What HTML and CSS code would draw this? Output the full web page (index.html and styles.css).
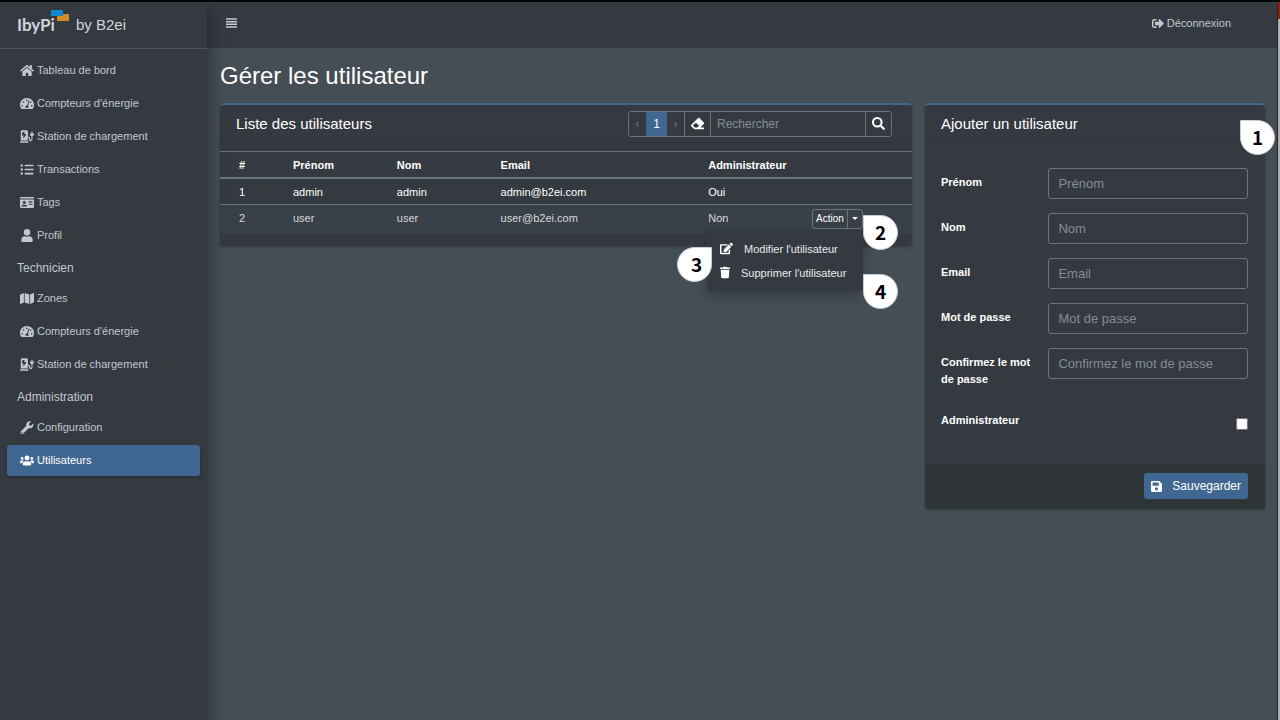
FILE: index.html
```
<!DOCTYPE html>
<html lang="fr">
<head>
<meta charset="utf-8">
<title>Gérer les utilisateur</title>
<link rel="stylesheet" href="styles.css">
</head>
<body>
<svg class="defs" aria-hidden="true">
  <symbol id="home" viewBox="0 0 576 512"><path d="M280.400 148.300L96 300.100V464a16 16 0 0 0 16 16l112-.3a16 16 0 0 0 16-16V368a16 16 0 0 1 16-16h64a16 16 0 0 1 16 16v95.600a16 16 0 0 0 16 16.100L464 480a16 16 0 0 0 16-16V300L295.700 148.300a12.200 12.200 0 0 0-15.300 0zM571.600 251.500L488 182.600V44a12 12 0 0 0-12-12h-56a12 12 0 0 0-12 12v72.600L318.500 43a48 48 0 0 0-61 0L4.300 251.500a12 12 0 0 0-1.600 16.900l25.500 31a12 12 0 0 0 16.900 1.600l235.200-193.700a12.200 12.200 0 0 1 15.300 0L530.900 301a12 12 0 0 0 16.900-1.600l25.500-31a12 12 0 0 0-1.700-16.900z"/></symbol>
  <symbol id="gauge" viewBox="0 0 576 512"><path fill-rule="evenodd" d="M288 32C129 32 0 161 0 320c0 53 14 102 39 145 6 9 16 15 27 15h444c11 0 21-6 27-15 25-43 39-92 39-145C576 161 447 32 288 32zM288 96a32 32 0 1 1 0 64 32 32 0 0 1 0-64zM96 384a32 32 0 1 1 0-64 32 32 0 0 1 0 64zm48-160a32 32 0 1 1 0-64 32 32 0 0 1 0 64zm247-56l-61 184c13 12 22 29 22 48 0 12-3 23-9 32H233c-6-9-9-20-9-32 0-35 29-64 64-64 2 0 3 0 5 1l61-185c4-12 18-19 30-15 13 4 11 19 7 31zm15 46c5-32 31-54 58-38 18 10 20 34 4 44-22 14-50 6-62-6zm74 170a32 32 0 1 1 0-64 32 32 0 0 1 0 64z"/></symbol>
  <symbol id="station" viewBox="0 0 576 512"><path d="M336 448H16c-9 0-16 7-16 16v32c0 9 7 16 16 16h320c9 0 16-7 16-16v-32c0-9-7-16-16-16zm208-320V80a16 16 0 0 0-32 0v48h-32V80a16 16 0 0 0-32 0v48h-16a16 16 0 0 0-16 16v32c0 36 24 66 56 76v122c0 14-11 26-24 26s-24-12-24-26v-22c0-49-39-88-88-88h-8V64c0-35-29-64-64-64H96C61 0 32 29 32 64v352h288V304h8c22 0 40 18 40 40v30c0 40 33 74 72 74s72-34 72-74V252c32-10 56-40 56-76v-32a16 16 0 0 0-16-16h-8zM258 182L152 313c-8 9-22 2-20-9l16-90h-54c-8 0-14-7-12-15L98 79c1-6 6-9 12-9h68c8 0 14 7 12 15l-16 71h72c12 0 20 14 12 26z"/></symbol>
  <symbol id="list" viewBox="0 0 512 512"><path d="M48 48a48 48 0 1 0 0 96 48 48 0 0 0 0-96zm0 160a48 48 0 1 0 0 96 48 48 0 0 0 0-96zm0 160a48 48 0 1 0 0 96 48 48 0 0 0 0-96zm448 16H176a16 16 0 0 0-16 16v32a16 16 0 0 0 16 16h320a16 16 0 0 0 16-16v-32a16 16 0 0 0-16-16zm0-320H176a16 16 0 0 0-16 16v32a16 16 0 0 0 16 16h320a16 16 0 0 0 16-16V80a16 16 0 0 0-16-16zm0 160H176a16 16 0 0 0-16 16v32a16 16 0 0 0 16 16h320a16 16 0 0 0 16-16v-32a16 16 0 0 0-16-16z"/></symbol>
  <symbol id="card" viewBox="0 0 576 512"><path d="M528 32H48C22 32 0 54 0 80v16h576V80c0-26-22-48-48-48zM0 432c0 26 22 48 48 48h480c26 0 48-22 48-48V128H0v304zm352-232c0-4 4-8 8-8h144c4 0 8 4 8 8v16c0 4-4 8-8 8H360c-4 0-8-4-8-8v-16zm0 64c0-4 4-8 8-8h144c4 0 8 4 8 8v16c0 4-4 8-8 8H360c-4 0-8-4-8-8v-16zm0 64c0-4 4-8 8-8h144c4 0 8 4 8 8v16c0 4-4 8-8 8H360c-4 0-8-4-8-8v-16zM176 192a64 64 0 1 1 0 128 64 64 0 0 1 0-128zM67 396c9-26 33-44 62-44h8c25 10 54 10 79 0h8c29 0 53 18 62 44 3 10-6 20-16 20H83c-11 0-19-10-16-20z"/></symbol>
  <symbol id="user" viewBox="0 0 448 512"><path d="M224 256a128 128 0 1 0 0-256 128 128 0 0 0 0 256zm90 32h-17a174 174 0 0 1-146 0h-17C60 288 0 348 0 422v42c0 27 21 48 48 48h352c27 0 48-21 48-48v-42c0-74-60-134-134-134z"/></symbol>
  <symbol id="map" viewBox="0 0 576 512"><path d="M0 118v346c0 11 11 19 22 15l138-63V32L20 88c-12 5-20 17-20 30zm192 298l192 64V96L192 32v384zM554 33L416 96v384l140-56c12-5 20-17 20-30V48c0-11-11-19-22-15z"/></symbol>
  <symbol id="wrench" viewBox="0 0 512 512"><path d="M507 116c-2-9-14-12-21-5l-74 74-68-11-11-68 74-74c7-7 4-19-5-21A144 144 0 0 0 231 189L19 402a64 64 0 1 0 91 91l212-212a144 144 0 0 0 185-165zM64 472a24 24 0 1 1 0-48 24 24 0 0 1 0 48z"/></symbol>
  <symbol id="users" viewBox="0 0 640 512"><path d="M96 224a64 64 0 1 0 0-128 64 64 0 0 0 0 128zm448 0a64 64 0 1 0 0-128 64 64 0 0 0 0 128zm32 32h-64c-18 0-34 7-45 19 40 22 69 62 75 109h66c18 0 32-14 32-32v-32c0-35-29-64-64-64zm-256 0a112 112 0 1 0 0-224 112 112 0 0 0 0 224zm77 32h-8a155 155 0 0 1-138 0h-8C179 288 128 339 128 403v29c0 27 21 48 48 48h288c27 0 48-21 48-48v-29c0-64-51-115-115-115zm-224-13c-11-12-27-19-45-19H64c-35 0-64 29-64 64v32c0 18 14 32 32 32h66c6-47 35-87 75-109z"/></symbol>
  <symbol id="bars" viewBox="0 0 110 100"><path d="M0 2h110v15H0zM0 29h110v15H0zM0 56h110v15H0zM0 83h110v15H0z"/></symbol>
  <symbol id="logout" viewBox="0 0 512 512"><path d="M497 273L329 441c-15 15-41 4-41-17v-96H152c-13 0-24-11-24-24v-96c0-13 11-24 24-24h136V88c0-21 26-32 41-17l168 168c9 10 9 25 0 34zM192 436v-40c0-7-5-12-12-12H96c-18 0-32-14-32-32V160c0-18 14-32 32-32h84c7 0 12-5 12-12V76c0-7-5-12-12-12H96c-53 0-96 43-96 96v192c0 53 43 96 96 96h84c7 0 12-5 12-12z"/></symbol>
  <symbol id="eraser" viewBox="0 0 512 512"><path d="M498 274c19-19 19-49 0-68L338 46c-19-19-49-19-68 0L14 302c-19 19-19 49 0 68l96 96c9 9 21 14 34 14h356c7 0 12-5 12-12v-40c0-7-5-12-12-12H376l122-142zM195 227l122 122-67 67H150l-80-80 125-109z"/></symbol>
  <symbol id="search" viewBox="0 0 512 512"><path d="M505 443L405 343c-4-4-11-7-17-7h-16A208 208 0 1 0 336 372v16c0 6 3 13 7 17l100 100c9 9 24 9 34 0l28-28c9-10 9-25 0-34zM208 336a128 128 0 1 1 0-256 128 128 0 0 1 0 256z"/></symbol>
  <symbol id="edit" viewBox="0 0 576 512"><path d="M403 83l90 90c4 4 4 10 0 14L274 406l-93 10c-12 2-23-9-21-21l10-93L389 83c4-4 10-4 14 0zm162-23l-49-49c-15-15-40-15-55 0l-35 35c-4 4-4 10 0 14l90 90c4 4 10 4 14 0l35-35c15-15 15-40 0-55zM384 346v102H64V128h230c3 0 6-1 8-4l40-40c8-7 3-20-8-20H48c-26 0-48 22-48 48v352c0 26 22 48 48 48h352c26 0 48-22 48-48V306c0-11-13-16-20-8l-40 40c-3 2-4 5-4 8z"/></symbol>
  <symbol id="trash" viewBox="0 0 448 512"><path d="M432 32H312l-9-19A24 24 0 0 0 281 0H167a24 24 0 0 0-22 13l-9 19H16A16 16 0 0 0 0 48v32a16 16 0 0 0 16 16h416a16 16 0 0 0 16-16V48a16 16 0 0 0-16-16zM32 128l21 339a48 48 0 0 0 48 45h246a48 48 0 0 0 48-45l21-339z"/></symbol>
  <symbol id="save" viewBox="0 0 448 512"><path d="M434 130l-84-84c-9-9-21-14-34-14H48C21 32 0 54 0 80v352c0 27 21 48 48 48h352c27 0 48-21 48-48V164c0-13-5-25-14-34zM224 416a64 64 0 1 1 0-128 64 64 0 0 1 0 128zm96-304v100c0 7-5 12-12 12H76c-7 0-12-5-12-12V108c0-7 5-12 12-12h232z"/></symbol>
</svg>
<div class="app">
  <aside class="sidebar">
    <a class="brand" href="#">
      <span class="logo">IbyPi<svg class="flag" viewBox="0 0 18 11" aria-hidden="true"><path fill="#d18b20" d="M6 4h12v7H6z"/><path fill="#1487d4" d="M0 0h12v6H0z"/></svg></span>
      <span class="by">by B2ei</span>
    </a>
    <nav class="nav">
      <a href="#"><svg><use href="#home"/></svg>Tableau de bord</a>
      <a href="#"><svg><use href="#gauge"/></svg>Compteurs d'énergie</a>
      <a href="#"><svg><use href="#station"/></svg>Station de chargement</a>
      <a href="#"><svg><use href="#list"/></svg>Transactions</a>
      <a href="#"><svg><use href="#card"/></svg>Tags</a>
      <a href="#"><svg><use href="#user"/></svg>Profil</a>
      <h2>Technicien</h2>
      <a href="#"><svg><use href="#map"/></svg>Zones</a>
      <a href="#"><svg><use href="#gauge"/></svg>Compteurs d'énergie</a>
      <a href="#"><svg><use href="#station"/></svg>Station de chargement</a>
      <h2>Administration</h2>
      <a href="#"><svg><use href="#wrench"/></svg>Configuration</a>
      <a href="#" class="active"><svg><use href="#users"/></svg>Utilisateurs</a>
    </nav>
  </aside>
  <div class="page">
    <header class="topbar">
      <button class="menu-toggle" type="button" aria-label="Menu"><svg><use href="#bars"/></svg></button>
      <a class="logout" href="#"><svg><use href="#logout"/></svg>Déconnexion</a>
    </header>
    <main class="content">
      <h1>Gérer les utilisateur</h1>
      <div class="columns">
        <section class="card">
          <div class="card-header">
            <h3>Liste des utilisateurs</h3>
            <div class="tools">
              <button class="pg" type="button" disabled>‹</button>
              <button class="pg current" type="button">1</button>
              <button class="pg" type="button" disabled>›</button>
              <button class="erase" type="button" aria-label="Effacer"><svg><use href="#eraser"/></svg></button>
              <input type="text" placeholder="Rechercher" aria-label="Rechercher">
              <button class="find" type="button" aria-label="Lancer la recherche"><svg><use href="#search"/></svg></button>
            </div>
          </div>
          <div class="table-wrap">
            <table>
              <colgroup><col class="c-id"><col class="c-name"><col class="c-name"><col class="c-mail"><col class="c-name"><col></colgroup>
              <thead><tr><th>#</th><th>Prénom</th><th>Nom</th><th>Email</th><th>Administrateur</th><th></th></tr></thead>
              <tbody>
                <tr><td>1</td><td>admin</td><td>admin</td><td>admin@b2ei.com</td><td>Oui</td><td></td></tr>
                <tr class="hover"><td>2</td><td>user</td><td>user</td><td>user@b2ei.com</td><td>Non</td><td>
                  <div class="action">
                    <button type="button">Action</button><button class="caret" type="button" aria-label="Ouvrir le menu"><span></span></button>
                    <div class="dropdown">
                      <a href="#"><svg><use href="#edit"/></svg><span>Modifier l'utilisateur</span></a>
                      <a href="#"><svg class="bin"><use href="#trash"/></svg><span>Supprimer l'utilisateur</span></a>
                    </div>
                    <span class="marker m2">2</span>
                    <span class="marker m3">3</span>
                    <span class="marker m4">4</span>
                  </div>
                </td></tr>
              </tbody>
            </table>
          </div>
        </section>
        <form class="card">
          <div class="card-header"><h3>Ajouter un utilisateur</h3></div>
          <div class="fields">
            <label for="prenom">Prénom</label><input id="prenom" type="text" placeholder="Prénom">
            <label for="nom">Nom</label><input id="nom" type="text" placeholder="Nom">
            <label for="email">Email</label><input id="email" type="email" placeholder="Email">
            <label for="mdp">Mot de passe</label><input id="mdp" type="password" placeholder="Mot de passe">
            <label for="mdp2">Confirmez le mot de passe</label><input id="mdp2" type="password" placeholder="Confirmez le mot de passe">
            <label class="admin-label" for="admin">Administrateur</label><input id="admin" type="checkbox">
          </div>
          <div class="card-footer"><button class="save" type="submit"><svg><use href="#save"/></svg>Sauvegarder</button></div>
          <span class="marker m1">1</span>
        </form>
      </div>
    </main>
  </div>
  <div class="edge"></div>
</div>
</body>
</html>
```
FILE: styles.css
```
* { box-sizing: border-box; }

body {
  margin: 0;
  background: #454d55;
  color: #fff;
  font: 11px/20px "Liberation Sans", Arial, sans-serif;
}

a { color: inherit; text-decoration: none; }
h1, h2, h3 { margin: 0; font-weight: 400; }
button, input { font-family: inherit; color: inherit; margin: 0; }
button { padding: 0; border: 0; background: none; }
svg { fill: currentColor; width: 13px; height: 13px; flex: none; }
.defs { display: none; }

.app {
  display: flex;
  min-height: 100vh;
  border-top: 2px solid #050607;
}

/* Sidebar */
.sidebar {
  width: 207px;
  flex: none;
  background: #343a40;
  color: #c2c7d0;
  box-shadow: 0 10px 20px rgba(0, 0, 0, .25), 0 8px 12px rgba(0, 0, 0, .22);
  z-index: 1;
}

.brand {
  display: flex;
  align-items: center;
  gap: 21px;
  height: 47px;
  padding-left: 17px;
  border-bottom: 1px solid #4b545c;
  color: #d0d4db;
}

.logo {
  position: relative;
  font: 700 17px/22px Lato, sans-serif;
}

.flag {
  position: absolute;
  left: 34px;
  top: -4px;
  width: 18px;
  height: 11px;
}

.by { font-size: 15px; }

.nav { padding: 6px 7px; }

.nav a {
  display: flex;
  align-items: center;
  gap: 3px;
  height: 31px;
  margin-bottom: 2px;
  padding: 0 0 1px 13px;
  border-radius: 3px;
}

.nav svg { width: 14px; }

.nav h2 {
  padding-left: 10px;
  font-size: 12px;
  line-height: 30px;
}

.nav .active {
  background: #3f6791;
  color: #fff;
  box-shadow: 0 1px 3px rgba(0, 0, 0, .3);
}

/* Page */
.page { flex: 1; min-width: 0; }

.edge {
  width: 3px;
  border-left: 1px solid #23272b;
  background: linear-gradient(#8e2113 17px, #aeb0b2 17px);
}

.topbar {
  display: flex;
  align-items: center;
  justify-content: space-between;
  height: 47px;
  padding: 0 46px 4px 19px;
  background: #343a40;
  border-bottom: 1px solid #4b545c;
  color: #c2c7d0;
}

.menu-toggle { display: flex; }
.menu-toggle svg { width: 11px; height: 10px; }
.logout { display: flex; align-items: center; gap: 3px; }
.logout svg { width: 12px; }

.content { padding: 12px 12px 13px 13px; }

h1 { font-size: 24px; line-height: 30px; }

.columns {
  display: grid;
  grid-template-columns: 173fr 85fr;
  align-items: start;
  gap: 13px;
  margin-top: 12px;
}

.card {
  position: relative;
  background: #343a40;
  border-top: 2px solid #3f6791;
  border-radius: 4px;
  box-shadow: 0 1px 3px rgba(0, 0, 0, .25);
}

.card-header {
  display: flex;
  align-items: center;
  justify-content: space-between;
  height: 38px;
  padding: 0 20px 0 16px;
  border-bottom: 1px solid #2f3439;
}

h3 { font-size: 15px; line-height: 24px; }

.tools {
  display: flex;
  height: 26px;
  border: 1px solid #6c757d;
  border-radius: 3px;
  overflow: hidden;
}

.pg { width: 17px; font-size: 12px; color: #6c757d; }
.pg.current { width: 21px; background: #3f6791; color: #fff; }

.erase, .find {
  display: flex;
  align-items: center;
  justify-content: center;
  width: 26px;
  border-left: 1px solid #6c757d;
}

.tools input {
  width: 155px;
  padding: 0 6px;
  border: 0;
  border-left: 1px solid #6c757d;
  background: transparent;
  font-size: 12px;
}

input::placeholder { color: #868d94; opacity: 1; }

/* Table */
.table-wrap { padding: 8px 0 12px; }

table {
  width: 100%;
  table-layout: fixed;
  border-collapse: separate;
  border-spacing: 0;
}

.c-id { width: 67px; }
.c-name { width: 15%; }
.c-mail { width: 30%; }

th, td {
  height: 26px;
  padding: 3px 6px 2px;
  border-top: 1px solid #6c757d;
  text-align: left;
  vertical-align: top;
}

th { border-bottom: 1px solid #6c757d; }
th:first-child, td:first-child { padding-left: 19px; }
.hover td { height: 30px; background: #3a4047; color: #d6d8da; }

.action {
  position: relative;
  display: inline-flex;
  height: 20px;
  border: 1px solid #6c757d;
  border-radius: 3px;
}

.action button { width: 34px; font-size: 10px; color: #fff; }

.action .caret {
  display: flex;
  align-items: center;
  justify-content: center;
  width: 15px;
  border-left: 1px solid #6c757d;
}

.caret span {
  border: 3px solid transparent;
  border-top-color: #fff;
  border-bottom: 0;
}

.dropdown {
  position: absolute;
  top: 20px;
  right: -1px;
  width: 156px;
  padding: 7px 0 6px 13px;
  background: #343a40;
  border-radius: 3px;
  color: #e9ebed;
  box-shadow: 0 6px 13px rgba(0, 0, 0, .2);
}

.dropdown a { display: flex; align-items: center; gap: 11px; height: 24px; white-space: nowrap; }
.dropdown svg { color: #fff; }
.dropdown .bin { width: 10px; }

/* Numbered callouts */
.marker {
  position: absolute;
  width: 35px;
  height: 35px;
  border: 1px solid #c9ccd3;
  border-radius: 0 50% 50% 50%;
  background: #fff;
  color: #000;
  font: 700 19px/31px "Noto Sans CJK SC", sans-serif;
  text-align: center;
}

.m1 { top: 15px; right: -10px; }
.m2 { top: 5px; left: 50px; }
.m3 { top: 37px; right: 150px; padding-left: 4px; border-radius: 50% 0 50% 50%; }
.m4 { top: 64px; left: 50px; }

/* Form */
.fields {
  display: grid;
  grid-template-columns: 35fr 65fr;
  row-gap: 14px;
  align-items: start;
  padding: 25px 17px 24px 16px;
}

.fields label {
  padding: 6px 13px 0 0;
  font-weight: 700;
  line-height: 17px;
}

.fields input:not([type="checkbox"]) {
  width: 100%;
  height: 31px;
  padding: 0 9px;
  border: 1px solid #6c757d;
  border-radius: 3px;
  background: #343a40;
  font-size: 13px;
}

.fields .admin-label { padding-top: 10px; height: 38px; }

#admin {
  justify-self: end;
  width: 12px;
  height: 12px;
  margin-top: 16px;
}

.card-footer {
  display: flex;
  justify-content: flex-end;
  padding: 9px 17px 10px;
  background: #2f3437;
  border-radius: 0 0 4px 4px;
}

.save {
  display: flex;
  align-items: center;
  gap: 10px;
  height: 26px;
  padding: 0 7px;
  border-radius: 3px;
  background: #3f6791;
  font-size: 12px;
}

.save svg { width: 11px; }
```
